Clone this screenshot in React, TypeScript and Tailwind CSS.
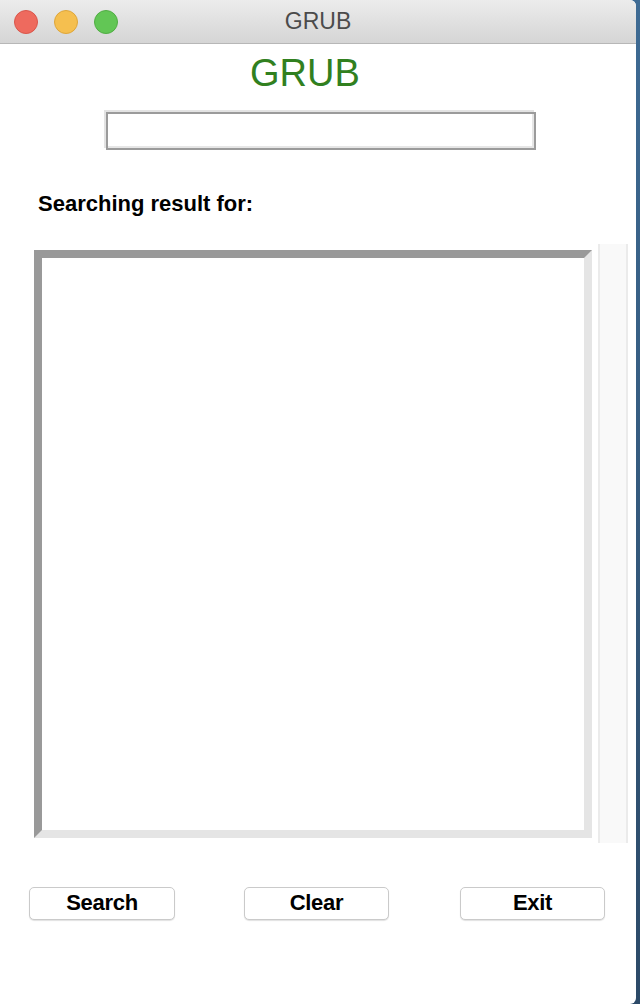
import React from "react";

const font = { fontFamily: '"Liberation Sans", Arial, Helvetica, sans-serif' };

function Btn({ label, className }: { label: string; className: string }) {
  return (
    <div
      className={`h-[33px] pb-[2px] flex items-center justify-center bg-white border border-[#cacaca] rounded-[5px] shadow-[0_1px_1px_rgba(0,0,0,0.12)] text-[22px] font-bold text-black leading-none tracking-[-0.3px] ${className}`}
    >
      {label}
    </div>
  );
}

export default function App() {
  return (
    <div
      className="flex h-[1004px] w-[640px] bg-gradient-to-b from-[#3e6b94] to-[#2c4a68]"
      style={font}
    >
      <div className="w-[636px] h-full bg-white rounded-tr-[6px] rounded-br-[6px] overflow-hidden flex flex-col">
        {/* title bar */}
        <div className="relative h-[44px] shrink-0 bg-gradient-to-b from-[#ececec] to-[#d5d5d5] border-b border-[#b7b7b7] flex items-center pl-[14px] gap-[16px]">
          <div className="w-[24px] h-[24px] rounded-full bg-[#ee6a5e] border border-[#d9564b]" />
          <div className="w-[24px] h-[24px] rounded-full bg-[#f5bf4f] border border-[#dea63a]" />
          <div className="w-[24px] h-[24px] rounded-full bg-[#62c655] border border-[#51ad44]" />
          <div className="absolute inset-0 flex items-center justify-center text-[23px] text-[#4b4b4b] leading-none">
            GRUB
          </div>
        </div>

        {/* heading */}
        <div className="mt-[10px] h-[38px] leading-[38px] text-[38px] text-[#31801f] pl-[250px]">
          GRUB
        </div>

        {/* input */}
        <div className="mt-[20px] ml-[106px] w-[430px] h-[38px] bg-white border-2 border-[#9b9b9b] shadow-[-2px_-2px_0_0_#e3e3e3,inset_-2px_-2px_0_0_#e6e6e6]" />

        {/* label */}
        <div className="mt-[41px] pl-[38px] text-[22px] leading-[26px] font-bold text-black">
          Searching result for:
        </div>

        {/* list + scrollbar */}
        <div className="mt-[27px] flex items-start pl-[34px] gap-[6px]">
          <div className="mt-[6px] w-[558px] h-[588px] bg-white border-[8px] border-t-[#999999] border-l-[#999999] border-b-[#e5e5e5] border-r-[#e5e5e5]" />
          <div className="w-[30px] h-[599px] bg-[#f9f9f9] border-x-2 border-[#ebebeb]" />
        </div>

        {/* buttons */}
        <div className="mt-[44px] flex">
          <Btn label="Search" className="ml-[29px] w-[146px]" />
          <Btn label="Clear" className="ml-[69px] w-[145px]" />
          <Btn label="Exit" className="ml-[71px] w-[145px]" />
        </div>
      </div>
      <div className="flex-1" />
    </div>
  );
}
